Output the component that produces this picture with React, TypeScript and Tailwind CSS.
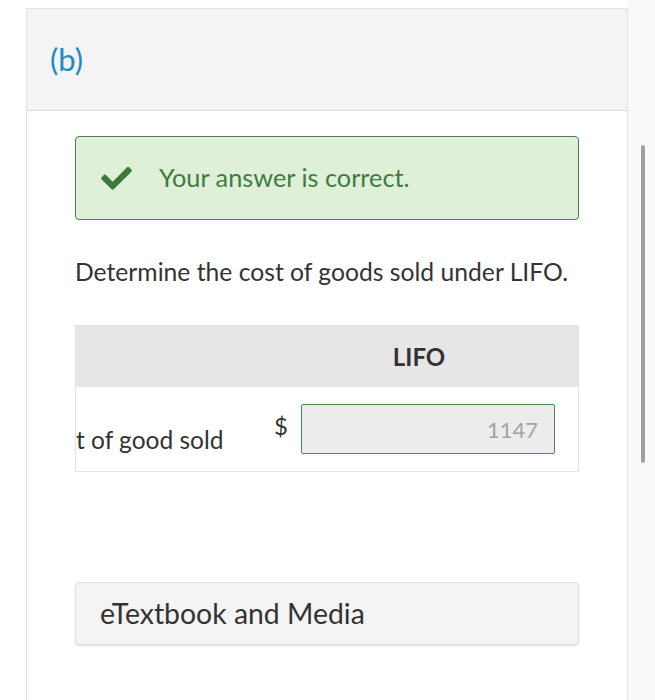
export default function App() {
  return (
    <main className="flex h-[700px] w-[655px] overflow-hidden bg-white font-['Lato',sans-serif] text-[#333]">
      <div className="w-[26px] shrink-0" />

      <section className="mt-[8px] flex w-[602px] shrink-0 flex-col border-x border-t border-[#e2e2e2]">
        <header className="flex h-[102px] items-center border-b border-[#dcdcdc] bg-[#f4f4f4] pl-[23px]">
          <span className="text-[31px] leading-none text-[#2189c7]">(b)</span>
        </header>

        <div className="flex flex-1 flex-col bg-white px-[48px] pt-[25px]">
          <div className="flex h-[84px] items-center rounded-[4px] border border-[#4b7f4d] bg-[#dff0d8] pl-[25px]">
            <svg viewBox="0 0 512 400" className="h-[24px] w-[31px] fill-[#3b7a3f]">
              <path d="M173.9 389.4L7.5 223c-10-10-10-26.2 0-36.2l36.2-36.2c10-10 26.2-10 36.2 0L192 262.7 432.1 22.6c10-10 26.2-10 36.2 0l36.2 36.2c10 10 10 26.2 0 36.2L210.1 389.4c-10 10-26.2 10-36.2 0z" />
            </svg>
            <span className="ml-[27px] text-[25.3px] text-[#3f7b42]">Your answer is correct.</span>
          </div>

          <p className="mt-[37px] text-[24.7px] leading-[30px] text-[#333]">
            Determine the cost of goods sold under LIFO.
          </p>

          <div className="mt-[38px] border border-[#e3e3e3]">
            <div className="flex h-[61px] items-center bg-[#e6e6e6]">
              <div className="w-[190px]" />
              <div className="flex-1 pr-[6px] text-center text-[24px] font-bold text-[#333]">LIFO</div>
            </div>
            <div className="flex h-[84px] items-center">
              <div className="w-[198px] pt-[22px] text-[24.5px] leading-none">t of good sold</div>
              <div className="w-[27px] pb-[6px] text-[24px] leading-none">$</div>
              <div className="flex h-[50px] w-[254px] items-center justify-end rounded-[2px] border border-[#4f8a50] bg-[#ececec] pr-[16px] text-[22px] text-[#a3a3a3]">
                1147
              </div>
            </div>
          </div>

          <div className="mt-[110px] flex h-[63px] items-center rounded-[4px] border border-[#e0e0e0] bg-[#f4f4f4] pl-[24px] shadow-[0_1px_2px_rgba(0,0,0,0.12)]">
            <span className="text-[28.4px] text-[#333]">eTextbook and Media</span>
          </div>
        </div>
      </section>

      <aside className="flex flex-1 justify-center bg-[#f9f9f9]">
        <div className="ml-[2px] mt-[145px] h-[318px] w-[4px] rounded-full bg-[#a0a0a0]" />
      </aside>
    </main>
  )
}
